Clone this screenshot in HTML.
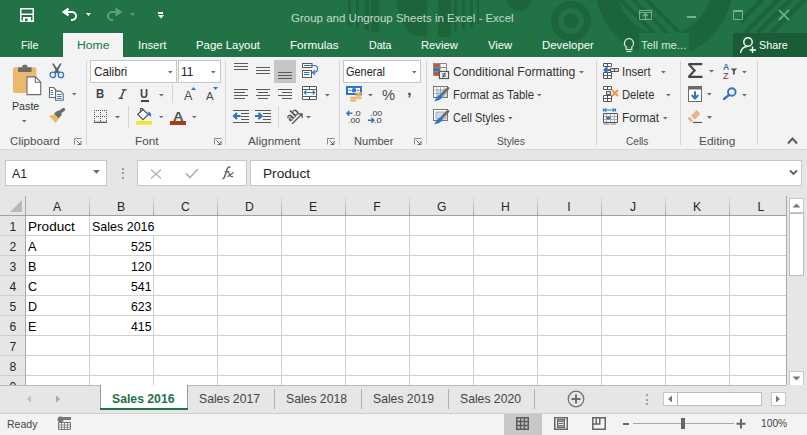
<!DOCTYPE html><html><head><meta charset="utf-8"><style>
html,body{margin:0;padding:0}
body{width:807px;height:435px;overflow:hidden;position:relative;background:#e6e6e6;font-family:"Liberation Sans",sans-serif}
.a{position:absolute}
svg.a{overflow:visible}
.t{position:absolute;white-space:nowrap;line-height:1}
</style></head><body>
<div class="a" style="left:0px;top:0px;width:807px;height:57px;background:#217346;"></div>
<svg class="a" style="left:0px;top:0px;" width="807" height="57" viewBox="0 0 807 57">
<defs><clipPath id="ci"><circle cx="664" cy="-12" r="46.5"/></clipPath></defs>
<rect x="348" y="0" width="3" height="26" fill="#1c653b"/>
<rect x="356" y="0" width="3" height="28" fill="#1c653b"/>
<rect x="365" y="0" width="4" height="30" fill="#1c653b"/>
<rect x="371" y="0" width="8" height="32" fill="#1c653b"/>
<path d="M396 0 Q401 29 415 36 H427 V0 Z" fill="#1c653b"/>
<rect x="438" y="0" width="13" height="37" fill="#1c653b"/>
<rect x="454" y="0" width="3" height="31" fill="#1c653b"/>
<rect x="462" y="0" width="3" height="30" fill="#1c653b"/>
<rect x="470" y="0" width="3" height="28" fill="#1c653b"/>
<rect x="477" y="0" width="2" height="24" fill="#1c653b"/>
<circle cx="519" cy="-2" r="13" fill="#1c653b"/>
<circle cx="571" cy="21" r="16.6" fill="none" stroke="#1c653b" stroke-width="7"/>
<circle cx="571" cy="21" r="7.5" fill="#1c653b"/>
<circle cx="664" cy="-12" r="57.25" fill="none" stroke="#1c653b" stroke-width="21.5"/>
<g clip-path="url(#ci)" stroke="#1c653b" stroke-width="4">
<path d="M604 -3 L641 34"/><path d="M618 -3 L655 34"/><path d="M631 -3 L668 34"/><path d="M644 -3 L681 34"/>
</g>
<g stroke="#1c653b" stroke-width="5">
<path d="M740 22 L764 -2"/><path d="M745 33 L781 -3"/><path d="M758 33 L794 -3"/><path d="M771 33 L807 -3"/>
</g>
</svg>
<svg class="a" style="left:20px;top:8px;" width="14" height="14" viewBox="0 0 14 14"><path d="M0.75 0.75H13.25V13.25H0.75Z M0.75 6.25H13.25" fill="none" stroke="#fff" stroke-width="1.5"/><rect x="3" y="9" width="8" height="4.2" fill="#fff"/><rect x="5" y="10.5" width="2.5" height="2.8" fill="#217346"/></svg>
<svg class="a" style="left:62px;top:7px;" width="16" height="15" viewBox="0 0 16 15"><path d="M6.6 1.8 L1.8 5 L6.6 8.2" fill="none" stroke="#fff" stroke-width="2.4" stroke-linejoin="miter"/><path d="M3 5 H10 A4 4 0 0 1 10 13 H9" fill="none" stroke="#fff" stroke-width="2"/></svg>
<svg class="a" style="left:86px;top:13px;" width="5" height="3" viewBox="0 0 5 3"><path d="M0 0H5L2.5 3Z" fill="#fff"/></svg>
<svg class="a" style="left:106px;top:7px;" width="16" height="15" viewBox="0 0 16 15"><path d="M9.4 1.8 L14.2 5 L9.4 8.2" fill="none" stroke="#5f9e79" stroke-width="2.4"/><path d="M13 5 H6 A4 4 0 0 0 6 13 H7" fill="none" stroke="#5f9e79" stroke-width="2"/></svg>
<svg class="a" style="left:130px;top:13px;" width="5" height="3" viewBox="0 0 5 3"><path d="M0 0H5L2.5 3Z" fill="#5f9e79"/></svg>
<div class="a" style="left:158px;top:12px;width:5px;height:1.5px;background:#fff;"></div>
<svg class="a" style="left:157.5px;top:14.5px;" width="6" height="3.5" viewBox="0 0 6 3.5"><path d="M0 0H6L3.0 3.5Z" fill="#fff"/></svg>
<div class="t" style="left:290.7px;top:13px;font-size:11.8px;color:#c4dacd;font-weight:400;transform:scaleX(0.9754);transform-origin:0 0;">Group and Ungroup Sheets in Excel - Excel</div>
<svg class="a" style="left:638px;top:9px;" width="15" height="12" viewBox="0 0 15 12"><path d="M1.5 1.5H13.5V10.5H1.5Z" fill="none" stroke="#7fae92" stroke-width="1"/><path d="M1.5 3.5H13.5" stroke="#7fae92"/><path d="M7.5 10V5 M5 7 L7.5 4.5 L10 7" fill="none" stroke="#7fae92" stroke-width="1.2"/></svg>
<div class="a" style="left:687px;top:16px;width:9px;height:1.5px;background:#7fae92;"></div>
<svg class="a" style="left:732px;top:9px;" width="12" height="12" viewBox="0 0 12 12"><path d="M1.5 1.5H10.5V10.5H1.5Z" fill="none" stroke="#7fae92" stroke-width="1"/><rect x="1" y="1" width="10" height="2" fill="#7fae92"/></svg>
<svg class="a" style="left:778px;top:9px;" width="12" height="12" viewBox="0 0 12 12"><path d="M1 1L11 11M11 1L1 11" stroke="#7fae92" stroke-width="1.6"/></svg>
<div class="a" style="left:639px;top:33px;width:50px;height:24px;background:#217346;"></div>
<div class="a" style="left:63px;top:33px;width:60px;height:24px;background:#f3f3f3;"></div>
<div class="a" style="left:733px;top:33px;width:74px;height:24px;background:#195c36;"></div>
<div class="t" style="left:20.5px;top:39px;font-size:11.7px;color:#fff;font-weight:400;transform:scaleX(0.9234);transform-origin:0 0;">File</div>
<div class="t" style="left:76.5px;top:39px;font-size:11.7px;color:#217346;font-weight:400;transform:scaleX(1.0453);transform-origin:0 0;">Home</div>
<div class="t" style="left:138.4px;top:39px;font-size:11.7px;color:#fff;font-weight:400;transform:scaleX(0.9680);transform-origin:0 0;">Insert</div>
<div class="t" style="left:196.4px;top:39px;font-size:11.7px;color:#fff;font-weight:400;transform:scaleX(0.9735);transform-origin:0 0;">Page Layout</div>
<div class="t" style="left:290px;top:39px;font-size:11.7px;color:#fff;font-weight:400;transform:scaleX(0.9976);transform-origin:0 0;">Formulas</div>
<div class="t" style="left:368.7px;top:39px;font-size:11.7px;color:#fff;font-weight:400;transform:scaleX(0.9068);transform-origin:0 0;">Data</div>
<div class="t" style="left:421.2px;top:39px;font-size:11.7px;color:#fff;font-weight:400;transform:scaleX(0.9601);transform-origin:0 0;">Review</div>
<div class="t" style="left:487.5px;top:39px;font-size:11.7px;color:#fff;font-weight:400;transform:scaleX(0.9592);transform-origin:0 0;">View</div>
<div class="t" style="left:541.7px;top:39px;font-size:11.7px;color:#fff;font-weight:400;transform:scaleX(0.9741);transform-origin:0 0;">Developer</div>
<svg class="a" style="left:622px;top:35.5px;" width="14" height="19" viewBox="0 0 14 19"><path d="M7 2.5 A4.8 4.8 0 0 0 4.2 11 V13.5 H9.8 V11 A4.8 4.8 0 0 0 7 2.5Z" fill="none" stroke="#d6e7dc" stroke-width="1.2"/><path d="M4.5 15.5H9.5" stroke="#d6e7dc" stroke-width="1.2"/></svg>
<div class="t" style="left:641px;top:39px;font-size:11.7px;color:#d6e7dc;font-weight:400;transform:scaleX(0.9687);transform-origin:0 0;">Tell me...</div>
<svg class="a" style="left:739px;top:36px;" width="19" height="18" viewBox="0 0 19 18"><circle cx="9" cy="6" r="4.2" fill="none" stroke="#fff" stroke-width="1.4"/><path d="M1.5 17 Q2.5 11 8 10.5" fill="none" stroke="#fff" stroke-width="1.4"/><path d="M13.5 10.5V17 M10.5 14H17" stroke="#fff" stroke-width="1.4"/></svg>
<div class="t" style="left:759.3px;top:39px;font-size:11.7px;color:#fff;font-weight:400;transform:scaleX(0.9230);transform-origin:0 0;">Share</div>
<div class="a" style="left:0px;top:57px;width:807px;height:92px;background:#f3f3f3;"></div>
<div class="a" style="left:0px;top:149px;width:807px;height:1px;background:#d8d8d8;"></div>
<div class="a" style="left:86px;top:61px;width:1px;height:84px;background:#d4d4d4;"></div>
<div class="a" style="left:225px;top:61px;width:1px;height:84px;background:#d4d4d4;"></div>
<div class="a" style="left:339px;top:61px;width:1px;height:84px;background:#d4d4d4;"></div>
<div class="a" style="left:426px;top:61px;width:1px;height:84px;background:#d4d4d4;"></div>
<div class="a" style="left:596px;top:61px;width:1px;height:84px;background:#d4d4d4;"></div>
<div class="a" style="left:680px;top:61px;width:1px;height:84px;background:#d4d4d4;"></div>
<div class="a" style="left:757px;top:61px;width:1px;height:84px;background:#d4d4d4;"></div>
<div class="a" style="left:128px;top:106px;width:1px;height:22px;background:#d4d4d4;"></div>
<div class="a" style="left:172px;top:84px;width:1px;height:19px;background:#d4d4d4;"></div>
<div class="a" style="left:278px;top:106px;width:1px;height:22px;background:#d4d4d4;"></div>
<svg class="a" style="left:12px;top:64px;" width="30" height="32" viewBox="0 0 30 32">
<rect x="1" y="3.2" width="23.4" height="25.8" rx="2" fill="#ebb96c"/>
<rect x="10.4" y="0.8" width="5" height="3" rx="1.5" fill="#6b6b6b"/>
<rect x="6" y="3.2" width="13.6" height="4.8" rx="0.8" fill="#6b6b6b"/>
<path d="M15 12.9H23.5L28.7 18.1V30.6H15Z" fill="#fff" stroke="#6b6b6b" stroke-width="1.1"/>
<path d="M23.3 12.9V18.3H28.7" fill="none" stroke="#6b6b6b" stroke-width="1.1"/>
</svg>
<div class="t" style="left:11.8px;top:100px;font-size:11.7px;color:#333;font-weight:400;transform:scaleX(0.9133);transform-origin:0 0;">Paste</div>
<svg class="a" style="left:22.4px;top:120.3px;" width="4.5" height="2.4" viewBox="0 0 4.5 2.4"><path d="M0 0H4.5L2.25 2.4Z" fill="#6b6b6b"/></svg>
<svg class="a" style="left:49px;top:63px;" width="16" height="16" viewBox="0 0 16 16">
<path d="M3 0.5 L4.7 0.4 L10.6 9.2 L8.4 10.4 Z" fill="#5f5f5f"/>
<path d="M12.7 0.5 L11 0.4 L5.1 9.2 L7.3 10.4 Z" fill="#5f5f5f"/>
<circle cx="3.8" cy="11.9" r="2.7" fill="none" stroke="#2e75c5" stroke-width="1.3"/>
<circle cx="11.9" cy="11.9" r="2.7" fill="none" stroke="#2e75c5" stroke-width="1.3"/>
</svg>
<svg class="a" style="left:48px;top:86px;" width="17" height="16" viewBox="0 0 17 16">
<path d="M1.5 1.5H5.5L7.8 3.8V11.5H1.5Z" fill="#fff" stroke="#666" stroke-width="1.1"/>
<path d="M2.6 4.5H5.2M2.6 6.5H5.2M2.6 8.5H5.2" stroke="#2e75c5" stroke-width="1"/>
<path d="M7.6 5.1H12.4L15.2 7.9V14.3H7.6Z" fill="#fff" stroke="#666" stroke-width="1.1"/>
<path d="M9.2 8.5H13.6M9.2 10.5H13.6M9.2 12.5H13.6" stroke="#2e75c5" stroke-width="1"/>
</svg>
<svg class="a" style="left:71.5px;top:93px;" width="4.5" height="2.4" viewBox="0 0 4.5 2.4"><path d="M0 0H4.5L2.25 2.4Z" fill="#6b6b6b"/></svg>
<svg class="a" style="left:48px;top:108px;" width="18" height="17" viewBox="0 0 18 17">
<path d="M1 8L6.6 6.3L10.7 11L7.6 15Z" fill="#ebb96c"/>
<path d="M6 5.5L10.2 2.3L14 6.6L10.6 10.5Z" fill="#6b6b6b"/>
<path d="M11.8 4.3L15.5 1.5" stroke="#6b6b6b" stroke-width="3.4" stroke-linecap="round"/>
</svg>
<div class="t" style="left:9.6px;top:135px;font-size:11.7px;color:#4f4f4f;font-weight:400;transform:scaleX(0.9954);transform-origin:0 0;">Clipboard</div>
<svg class="a" style="left:74px;top:138px;" width="8" height="7" viewBox="0 0 8 7"><path d="M0.5 6.5V0.5H7.5" fill="none" stroke="#8a8a8a"/><path d="M2.5 2.5L6.5 6.5M3.5 6.5H7V3" fill="none" stroke="#6a6a6a" stroke-width="1"/></svg>
<div class="a" style="left:90px;top:60px;width:87px;height:23px;background:#fff;box-sizing:border-box;border:1px solid #c6c6c6"></div>
<div class="a" style="left:178px;top:60px;width:43px;height:23px;background:#fff;box-sizing:border-box;border:1px solid #c6c6c6"></div>
<div class="t" style="left:93.6px;top:67px;font-size:11.9px;color:#262626;font-weight:400;transform:scaleX(0.9851);transform-origin:0 0;">Calibri</div>
<svg class="a" style="left:168px;top:70.8px;" width="4.6" height="2.5" viewBox="0 0 4.6 2.5"><path d="M0 0H4.6L2.3 2.5Z" fill="#6b6b6b"/></svg>
<div class="t" style="left:181px;top:67px;font-size:11.9px;color:#262626;font-weight:400;">11</div>
<svg class="a" style="left:210.8px;top:70.8px;" width="4.6" height="2.5" viewBox="0 0 4.6 2.5"><path d="M0 0H4.6L2.3 2.5Z" fill="#6b6b6b"/></svg>
<div class="t" style="left:96.2px;top:88px;font-size:12.8px;color:#444;font-weight:700;transform:scaleX(0.8865);transform-origin:0 0;">B</div>
<svg class="a" style="left:118px;top:89px;" width="9" height="10" viewBox="0 0 9 10"><path d="M4 0.8H8.5M0.5 9.2H5M6.3 0.8L2.7 9.2" stroke="#555" stroke-width="1.6" fill="none"/></svg>
<div class="t" style="left:140.4px;top:88px;font-size:12.8px;color:#444;font-weight:700;transform:scaleX(0.8649);transform-origin:0 0;">U</div>
<div class="a" style="left:140.5px;top:100.2px;width:8px;height:1.4px;background:#444;"></div>
<svg class="a" style="left:159px;top:93.8px;" width="4.8" height="2.4" viewBox="0 0 4.8 2.4"><path d="M0 0H4.8L2.4 2.4Z" fill="#6b6b6b"/></svg>
<div class="t" style="left:183.5px;top:90px;font-size:12.8px;color:#4a4a4a;font-weight:400;transform:scaleX(0.9828);transform-origin:0 0;">A</div>
<svg class="a" style="left:191px;top:86.8px;" width="5" height="3" viewBox="0 0 5 3"><path d="M0 3H5L2.5 0Z" fill="#2e75c5"/></svg>
<div class="t" style="left:205.8px;top:91px;font-size:10.9px;color:#4a4a4a;font-weight:400;transform:scaleX(1.0460);transform-origin:0 0;">A</div>
<svg class="a" style="left:213px;top:86.8px;" width="5" height="3" viewBox="0 0 5 3"><path d="M0 0H5L2.5 3Z" fill="#2e75c5"/></svg>
<svg class="a" style="left:93px;top:109px;" width="15" height="14" viewBox="0 0 15 14"><path d="M1.5 1V12M7.5 1V12M13.5 1V12M1 1.5H14M1 7.5H14" stroke="#555" stroke-width="1" stroke-dasharray="1 1" fill="none"/><path d="M0.8 13.3H14.2" stroke="#555" stroke-width="1.3"/></svg>
<svg class="a" style="left:115px;top:115.8px;" width="5" height="2.5" viewBox="0 0 5 2.5"><path d="M0 0H5L2.5 2.5Z" fill="#6b6b6b"/></svg>
<svg class="a" style="left:135px;top:107px;" width="18" height="19" viewBox="0 0 18 19">
<path d="M2.8 7.5 L8 2.3 L13.2 7.5 L8 12.7 Z" fill="#fff" stroke="#555" stroke-width="1.2"/>
<path d="M5.5 5.5 V1.5 H7.5 V4" fill="none" stroke="#555" stroke-width="1.1"/>
<path d="M13.2 4.5 Q16.8 5.5 16 9.5 Q13.2 9 13.2 6.8 Z" fill="#2e75c5"/>
<rect x="1" y="14" width="16" height="3.7" fill="#f2e52a"/>
</svg>
<svg class="a" style="left:158.5px;top:116.3px;" width="4.5" height="2.3" viewBox="0 0 4.5 2.3"><path d="M0 0H4.5L2.25 2.3Z" fill="#6b6b6b"/></svg>
<div class="t" style="left:172.6px;top:110px;font-size:13.2px;color:#555;font-weight:700;transform:scaleX(1.1121);transform-origin:0 0;">A</div>
<div class="a" style="left:170px;top:121px;width:16px;height:3.7px;background:#a33f14;"></div>
<svg class="a" style="left:192px;top:116.3px;" width="4.6" height="2.3" viewBox="0 0 4.6 2.3"><path d="M0 0H4.6L2.3 2.3Z" fill="#6b6b6b"/></svg>
<div class="t" style="left:135.3px;top:135px;font-size:11.7px;color:#4f4f4f;font-weight:400;transform:scaleX(1.0090);transform-origin:0 0;">Font</div>
<svg class="a" style="left:214px;top:138px;" width="8" height="7" viewBox="0 0 8 7"><path d="M0.5 6.5V0.5H7.5" fill="none" stroke="#8a8a8a"/><path d="M2.5 2.5L6.5 6.5M3.5 6.5H7V3" fill="none" stroke="#6a6a6a" stroke-width="1"/></svg>
<div class="a" style="left:234px;top:63px;width:14px;height:1px;background:#5a5a5a;"></div>
<div class="a" style="left:234px;top:66px;width:14px;height:1px;background:#5a5a5a;"></div>
<div class="a" style="left:234px;top:69px;width:14px;height:1px;background:#5a5a5a;"></div>
<div class="a" style="left:256px;top:67px;width:14px;height:1px;background:#5a5a5a;"></div>
<div class="a" style="left:256px;top:70px;width:14px;height:1px;background:#5a5a5a;"></div>
<div class="a" style="left:256px;top:73px;width:14px;height:1px;background:#5a5a5a;"></div>
<div class="a" style="left:274px;top:60px;width:22px;height:23px;background:#c6c6c6;"></div>
<div class="a" style="left:278px;top:72px;width:14px;height:1px;background:#5a5a5a;"></div>
<div class="a" style="left:278px;top:75px;width:14px;height:1px;background:#5a5a5a;"></div>
<div class="a" style="left:278px;top:78px;width:14px;height:1px;background:#5a5a5a;"></div>
<div class="a" style="left:234px;top:89px;width:14px;height:1px;background:#5a5a5a;"></div>
<div class="a" style="left:256px;top:89px;width:14px;height:1px;background:#5a5a5a;"></div>
<div class="a" style="left:278px;top:89px;width:14px;height:1px;background:#5a5a5a;"></div>
<div class="a" style="left:234px;top:92px;width:11px;height:1px;background:#5a5a5a;"></div>
<div class="a" style="left:258px;top:92px;width:10px;height:1px;background:#5a5a5a;"></div>
<div class="a" style="left:282px;top:92px;width:10px;height:1px;background:#5a5a5a;"></div>
<div class="a" style="left:234px;top:95px;width:14px;height:1px;background:#5a5a5a;"></div>
<div class="a" style="left:256px;top:95px;width:14px;height:1px;background:#5a5a5a;"></div>
<div class="a" style="left:278px;top:95px;width:14px;height:1px;background:#5a5a5a;"></div>
<div class="a" style="left:234px;top:98px;width:11px;height:1px;background:#5a5a5a;"></div>
<div class="a" style="left:258px;top:98px;width:10px;height:1px;background:#5a5a5a;"></div>
<div class="a" style="left:282px;top:98px;width:10px;height:1px;background:#5a5a5a;"></div>
<div class="a" style="left:233px;top:110px;width:16px;height:1px;background:#5a5a5a;"></div>
<div class="a" style="left:255px;top:110px;width:16px;height:1px;background:#5a5a5a;"></div>
<div class="a" style="left:233px;top:122px;width:16px;height:1px;background:#5a5a5a;"></div>
<div class="a" style="left:255px;top:122px;width:16px;height:1px;background:#5a5a5a;"></div>
<div class="a" style="left:241px;top:113px;width:8px;height:1px;background:#5a5a5a;"></div>
<div class="a" style="left:263px;top:113px;width:8px;height:1px;background:#5a5a5a;"></div>
<div class="a" style="left:241px;top:116px;width:8px;height:1px;background:#5a5a5a;"></div>
<div class="a" style="left:263px;top:116px;width:8px;height:1px;background:#5a5a5a;"></div>
<div class="a" style="left:241px;top:119px;width:8px;height:1px;background:#5a5a5a;"></div>
<div class="a" style="left:263px;top:119px;width:8px;height:1px;background:#5a5a5a;"></div>
<svg class="a" style="left:232px;top:111px;" width="10" height="10" viewBox="0 0 10 10"><path d="M8.5 5H2.5M5 2L2 5L5 8" stroke="#2e75c5" stroke-width="2.2" fill="none"/></svg>
<svg class="a" style="left:254px;top:111px;" width="10" height="10" viewBox="0 0 10 10"><path d="M1 5H7M4.5 2L7.5 5L4.5 8" stroke="#2e75c5" stroke-width="2.2" fill="none"/></svg>
<svg class="a" style="left:284px;top:107px;" width="20" height="19" viewBox="0 0 20 19">
<text x="0" y="0" transform="translate(6.3 15) rotate(-45)" font-family="Liberation Sans" font-size="11.5" font-weight="700" fill="#505050">ab</text>
<path d="M8.2 16.8 L17.6 7.4 M14.3 6.9 H18.1 V10.7" stroke="#505050" stroke-width="1.3" fill="none"/>
</svg>
<svg class="a" style="left:306px;top:116.4px;" width="5" height="2.4" viewBox="0 0 5 2.4"><path d="M0 0H5L2.5 2.4Z" fill="#6b6b6b"/></svg>
<svg class="a" style="left:301px;top:62px;" width="18" height="17" viewBox="0 0 18 17">
<rect x="1.5" y="1.5" width="9.5" height="4" fill="#fff" stroke="#5a5a5a" stroke-width="1"/>
<rect x="1.5" y="8.5" width="9" height="7" fill="#fff" stroke="#5a5a5a" stroke-width="1"/>
<path d="M3 3.5H13.5 Q16.5 3.5 16.5 6.8 Q16.5 10.5 12.5 10.5" fill="none" stroke="#2e75c5" stroke-width="1.2"/>
<path d="M14 8.3L11.5 10.5L14 12.7" fill="none" stroke="#2e75c5" stroke-width="1.3"/>
<path d="M3 10.5H8.5M3 12.5H8.5" stroke="#2e75c5" stroke-width="1"/>
</svg>
<svg class="a" style="left:301px;top:85px;" width="17" height="16" viewBox="0 0 17 16">
<path d="M1.5 1.5H15.5V14.5H1.5Z M1.5 4.5H15.5 M1.5 11.5H15.5 M8.5 1.5V4.5 M8.5 11.5V14.5" fill="#fff" stroke="#5a5a5a" stroke-width="1"/>
<path d="M3.3 7.5H13.7 M5.3 5.5L3.3 7.5L5.3 9.5 M11.7 5.5L13.7 7.5L11.7 9.5" stroke="#2e75c5" stroke-width="1.2" fill="none"/>
</svg>
<svg class="a" style="left:324.5px;top:93.8px;" width="4.7" height="2.4" viewBox="0 0 4.7 2.4"><path d="M0 0H4.7L2.35 2.4Z" fill="#6b6b6b"/></svg>
<div class="t" style="left:247.5px;top:135px;font-size:11.7px;color:#4f4f4f;font-weight:400;transform:scaleX(1.0080);transform-origin:0 0;">Alignment</div>
<svg class="a" style="left:327px;top:138px;" width="8" height="7" viewBox="0 0 8 7"><path d="M0.5 6.5V0.5H7.5" fill="none" stroke="#8a8a8a"/><path d="M2.5 2.5L6.5 6.5M3.5 6.5H7V3" fill="none" stroke="#6a6a6a" stroke-width="1"/></svg>
<div class="a" style="left:343px;top:60px;width:78px;height:23px;background:#fff;box-sizing:border-box;border:1px solid #c6c6c6"></div>
<div class="t" style="left:346.4px;top:67px;font-size:11.9px;color:#262626;font-weight:400;transform:scaleX(0.9194);transform-origin:0 0;">General</div>
<svg class="a" style="left:411.6px;top:70.8px;" width="4.6" height="2.4" viewBox="0 0 4.6 2.4"><path d="M0 0H4.6L2.3 2.4Z" fill="#6b6b6b"/></svg>
<svg class="a" style="left:345px;top:85px;" width="18" height="18" viewBox="0 0 18 18">
<rect x="2" y="2" width="14" height="7" fill="#fff" stroke="#2e75c5" stroke-width="2"/>
<circle cx="9" cy="5.3" r="2.3" fill="#2e75c5"/>
<path d="M6 5.3H3.5M12 5.3H14.5" stroke="#2e75c5" stroke-width="1"/>
<ellipse cx="13.5" cy="8.2" rx="3.3" ry="1.2" fill="#ebb96c"/>
<ellipse cx="13.5" cy="10.6" rx="3.3" ry="1.2" fill="#ebb96c"/>
<ellipse cx="13.5" cy="13" rx="3.3" ry="1.2" fill="#ebb96c"/>
<ellipse cx="8.3" cy="12.8" rx="3.4" ry="1.3" fill="#ebb96c"/>
<ellipse cx="8.3" cy="15.5" rx="3.4" ry="1.3" fill="#ebb96c"/>
</svg>
<svg class="a" style="left:367.7px;top:93.8px;" width="4.8" height="2.6" viewBox="0 0 4.8 2.6"><path d="M0 0H4.8L2.4 2.6Z" fill="#6b6b6b"/></svg>
<div class="t" style="left:382px;top:88px;font-size:14.6px;color:#4a4a4a;font-weight:400;transform:scaleX(1.0012);transform-origin:0 0;">%</div>
<div class="t" style="left:406.6px;top:83px;font-size:14px;color:#4a4a4a;font-weight:700;transform:scaleX(1.1823);transform-origin:0 0;">,</div>
<svg class="a" style="left:345px;top:110px;" width="8" height="7" viewBox="0 0 8 7"><path d="M7.5 3.3H2M4.3 1L2 3.3L4.3 5.6" stroke="#2e75c5" stroke-width="1.5" fill="none"/></svg>
<div class="t" style="left:352.6px;top:110px;font-size:7.6px;color:#333;font-weight:400;transform:scaleX(1.2296);transform-origin:0 0;">.0</div>
<div class="t" style="left:347.8px;top:117px;font-size:7.6px;color:#333;font-weight:400;transform:scaleX(1.1550);transform-origin:0 0;">.00</div>
<div class="t" style="left:370px;top:110px;font-size:7.6px;color:#333;font-weight:400;transform:scaleX(1.1550);transform-origin:0 0;">.00</div>
<svg class="a" style="left:367px;top:117px;" width="9" height="7" viewBox="0 0 9 7"><path d="M1 3.3H6.8M4.5 1L6.8 3.3L4.5 5.6" stroke="#2e75c5" stroke-width="1.5" fill="none"/></svg>
<div class="t" style="left:374.4px;top:117px;font-size:7.6px;color:#333;font-weight:400;transform:scaleX(1.2296);transform-origin:0 0;">.0</div>
<div class="t" style="left:353.9px;top:135px;font-size:11.7px;color:#4f4f4f;font-weight:400;transform:scaleX(0.9500);transform-origin:0 0;">Number</div>
<svg class="a" style="left:414px;top:138px;" width="8" height="7" viewBox="0 0 8 7"><path d="M0.5 6.5V0.5H7.5" fill="none" stroke="#8a8a8a"/><path d="M2.5 2.5L6.5 6.5M3.5 6.5H7V3" fill="none" stroke="#6a6a6a" stroke-width="1"/></svg>
<svg class="a" style="left:432px;top:62px;" width="18" height="18" viewBox="0 0 18 18">
<rect x="1" y="1" width="7" height="4" fill="#c55a2a"/>
<rect x="1" y="5" width="7" height="4" fill="#2e75c5"/>
<rect x="1" y="9" width="7" height="4" fill="#c55a2a"/>
<path d="M1.5 1.5H14.5V13.5H1.5ZM8 1.5V13.5M1.5 5.5H14.5M1.5 9.5H14.5" fill="none" stroke="#8a8a8a" stroke-width="1"/>
<rect x="7.5" y="9.5" width="9" height="7" fill="#fff" stroke="#555" stroke-width="1.2"/>
<path d="M9.8 12H14.2M9.8 14.2H14.2M13 10.8L11 15.4" stroke="#333" stroke-width="0.9"/>
</svg>
<div class="t" style="left:452.8px;top:67px;font-size:11.9px;color:#333;font-weight:400;transform:scaleX(1.0231);transform-origin:0 0;">Conditional Formatting</div>
<svg class="a" style="left:578.8px;top:70.8px;" width="4.9" height="2.6" viewBox="0 0 4.9 2.6"><path d="M0 0H4.9L2.45 2.6Z" fill="#6b6b6b"/></svg>
<svg class="a" style="left:432px;top:85px;" width="18" height="18" viewBox="0 0 18 18">
<rect x="1.5" y="1.5" width="14" height="11" fill="#fff" stroke="#777" stroke-width="1"/>
<rect x="5" y="5" width="10" height="7" fill="#c9ddef"/>
<path d="M5 1.5V12.5M8.5 1.5V12.5M12 1.5V12.5M1.5 5H15.5M1.5 8.5H15.5" stroke="#9a9a9a" stroke-width="0.8"/>
</svg>
<svg class="a" style="left:432px;top:85px;" width="18" height="18" viewBox="0 0 18 18">
<path d="M16 3.2 L10 9.2" stroke="#6b6b6b" stroke-width="2.8" stroke-linecap="round"/>
<path d="M9.8 9 Q11.6 10.8 9.6 13.2 Q7.2 15.8 2.2 16.4 Q3.8 13.8 5 12 Q7 9 9.8 9Z" fill="#2e75c5"/>
</svg>
<div class="t" style="left:452.8px;top:90px;font-size:11.9px;color:#333;font-weight:400;transform:scaleX(0.9536);transform-origin:0 0;">Format as Table</div>
<svg class="a" style="left:537.2px;top:93.8px;" width="4.6" height="2.4" viewBox="0 0 4.6 2.4"><path d="M0 0H4.6L2.3 2.4Z" fill="#6b6b6b"/></svg>
<svg class="a" style="left:432px;top:108px;" width="18" height="18" viewBox="0 0 18 18">
<rect x="1.5" y="1.5" width="14" height="11" fill="#fff" stroke="#777" stroke-width="1"/>
<rect x="4" y="4" width="10" height="7" fill="#c9ddef" stroke="#9a9a9a" stroke-width="0.8"/>
</svg>
<svg class="a" style="left:432px;top:108px;" width="18" height="18" viewBox="0 0 18 18">
<path d="M16 3.2 L10 9.2" stroke="#6b6b6b" stroke-width="2.8" stroke-linecap="round"/>
<path d="M9.8 9 Q11.6 10.8 9.6 13.2 Q7.2 15.8 2.2 16.4 Q3.8 13.8 5 12 Q7 9 9.8 9Z" fill="#2e75c5"/>
</svg>
<div class="t" style="left:452.8px;top:113px;font-size:11.9px;color:#333;font-weight:400;transform:scaleX(0.9204);transform-origin:0 0;">Cell Styles</div>
<svg class="a" style="left:508.2px;top:117.2px;" width="4.6" height="2.4" viewBox="0 0 4.6 2.4"><path d="M0 0H4.6L2.3 2.4Z" fill="#6b6b6b"/></svg>
<div class="t" style="left:496.6px;top:135px;font-size:11.7px;color:#4f4f4f;font-weight:400;transform:scaleX(0.8766);transform-origin:0 0;">Styles</div>
<svg class="a" style="left:602px;top:62px;" width="18" height="18" viewBox="0 0 18 18">
<path d="M1.5 1.5H9.5V4.5H1.5ZM5.5 1.5V4.5" fill="#fff" stroke="#555" stroke-width="1"/>
<path d="M1.5 10.5H9.5V16.5H1.5ZM5.5 10.5V16.5M1.5 13.5H9.5" fill="#fff" stroke="#555" stroke-width="1"/>
<path d="M8.5 6.5H16.5V9.5H8.5ZM12.5 6.5V9.5" fill="#c6e0f5" stroke="#555" stroke-width="1"/>
<path d="M8 8H3M5.3 5.2L2.5 8L5.3 10.8" stroke="#2e75c5" stroke-width="2" fill="none"/>
</svg>
<div class="t" style="left:622.4px;top:67px;font-size:11.9px;color:#333;font-weight:400;transform:scaleX(0.9613);transform-origin:0 0;">Insert</div>
<svg class="a" style="left:661.2px;top:70.8px;" width="4.8" height="2.6" viewBox="0 0 4.8 2.6"><path d="M0 0H4.8L2.4 2.6Z" fill="#6b6b6b"/></svg>
<svg class="a" style="left:602px;top:85px;" width="18" height="18" viewBox="0 0 18 18">
<path d="M1.5 1.5H9.5V4.5H1.5ZM5.5 1.5V4.5" fill="#fff" stroke="#555" stroke-width="1"/>
<path d="M1.5 10.5H9.5V16.5H1.5ZM5.5 10.5V16.5M1.5 13.5H9.5" fill="#fff" stroke="#555" stroke-width="1"/>
<path d="M4.5 6.5H8.5V9.5H4.5Z" fill="#c6e0f5" stroke="#555" stroke-width="1"/>
<path d="M10 5L16 11M16 5L10 11" stroke="#eb9a3a" stroke-width="1.9"/>
</svg>
<div class="t" style="left:622.4px;top:90px;font-size:11.9px;color:#333;font-weight:400;transform:scaleX(0.9425);transform-origin:0 0;">Delete</div>
<svg class="a" style="left:665.5px;top:93.8px;" width="4.7" height="2.4" viewBox="0 0 4.7 2.4"><path d="M0 0H4.7L2.35 2.4Z" fill="#6b6b6b"/></svg>
<svg class="a" style="left:602px;top:108px;" width="18" height="18" viewBox="0 0 18 18">
<path d="M1.5 0.5V3.5M13.5 0.5V3.5" stroke="#2e75c5" stroke-width="1.2"/>
<path d="M2.5 2H12.5M4.3 0.4L2.5 2L4.3 3.6M10.7 0.4L12.5 2L10.7 3.6" stroke="#2e75c5" stroke-width="1.1" fill="none"/>
<path d="M4.5 5.5V14.5M8.5 5.5V14.5M12.5 5.5V14.5M1.5 8.5H15.5M1.5 11.5H15.5" stroke="#b0b0b0" stroke-width="1"/>
<rect x="4.5" y="8.5" width="4" height="3" fill="#2e75c5"/>
<path d="M1.5 5.5H15.5V14.5H1.5Z" fill="none" stroke="#555" stroke-width="1"/>
<path d="M1.5 16H7.5M8.5 16H14" stroke="#888" stroke-width="1.2"/>
</svg>
<div class="t" style="left:622.4px;top:113px;font-size:11.9px;color:#333;font-weight:400;transform:scaleX(0.9848);transform-origin:0 0;">Format</div>
<svg class="a" style="left:663px;top:117.2px;" width="4.6" height="2.4" viewBox="0 0 4.6 2.4"><path d="M0 0H4.6L2.3 2.4Z" fill="#6b6b6b"/></svg>
<div class="t" style="left:626px;top:135px;font-size:11.7px;color:#4f4f4f;font-weight:400;transform:scaleX(0.8621);transform-origin:0 0;">Cells</div>
<svg class="a" style="left:686px;top:62px;" width="17" height="17" viewBox="0 0 17 17"><path d="M15.2 3.2V2.1H2.6L8.6 8.5L2.6 14.9H15.4V13.8" fill="none" stroke="#444" stroke-width="2.1" stroke-miterlimit="2"/></svg>
<svg class="a" style="left:709px;top:70.1px;" width="5" height="2.6" viewBox="0 0 5 2.6"><path d="M0 0H5L2.5 2.6Z" fill="#6b6b6b"/></svg>
<div class="t" style="left:722.6px;top:63px;font-size:8.8px;color:#2e75c5;font-weight:700;transform:scaleX(0.9749);transform-origin:0 0;">A</div>
<div class="t" style="left:723.2px;top:72px;font-size:8.8px;color:#8a2b4e;font-weight:400;transform:scaleX(1.0419);transform-origin:0 0;">Z</div>
<svg class="a" style="left:730px;top:68px;" width="8" height="7" viewBox="0 0 8 7"><path d="M0.6 0.4H7.2L4.8 3V6.5H3V3Z" fill="#555"/></svg>
<svg class="a" style="left:742px;top:70.8px;" width="4.8" height="2.4" viewBox="0 0 4.8 2.4"><path d="M0 0H4.8L2.4 2.4Z" fill="#6b6b6b"/></svg>
<svg class="a" style="left:687px;top:85px;" width="16" height="18" viewBox="0 0 16 18">
<rect x="1.5" y="1.5" width="13" height="15" fill="#fff" stroke="#6b6b6b" stroke-width="1"/>
<rect x="1" y="1" width="14" height="3.5" fill="#6b6b6b"/>
<path d="M8 6.3V13.3M4.6 10L8 13.5L11.4 10" stroke="#2e75c5" stroke-width="2" fill="none"/>
</svg>
<svg class="a" style="left:707.4px;top:92.9px;" width="4.6" height="2.5" viewBox="0 0 4.6 2.5"><path d="M0 0H4.6L2.3 2.5Z" fill="#6b6b6b"/></svg>
<svg class="a" style="left:722px;top:87px;" width="16" height="14" viewBox="0 0 16 14"><circle cx="9.8" cy="5" r="3.8" fill="none" stroke="#2e75c5" stroke-width="1.9"/><path d="M7 7.9L2 12" stroke="#2e75c5" stroke-width="2.3" stroke-linecap="round"/></svg>
<svg class="a" style="left:742px;top:93.8px;" width="4.8" height="2.4" viewBox="0 0 4.8 2.4"><path d="M0 0H4.8L2.4 2.4Z" fill="#6b6b6b"/></svg>
<svg class="a" style="left:687px;top:108px;" width="16" height="16" viewBox="0 0 16 16">
<rect x="-2.75" y="-4.1" width="5.5" height="8.2" rx="1" fill="#eab28d" transform="translate(8.75 6.85) rotate(45)"/>
<rect x="-2.75" y="-1.3" width="5.5" height="2.6" rx="0.8" fill="#eab28d" transform="translate(3.4 11.6) rotate(45)"/>
<path d="M6 14.5H15" stroke="#555" stroke-width="1.2"/>
</svg>
<svg class="a" style="left:706.9px;top:115.9px;" width="5" height="3" viewBox="0 0 5 3"><path d="M0 0H5L2.5 3Z" fill="#6b6b6b"/></svg>
<div class="t" style="left:699.4px;top:135px;font-size:11.7px;color:#4f4f4f;font-weight:400;transform:scaleX(1.0154);transform-origin:0 0;">Editing</div>
<svg class="a" style="left:787px;top:137px;" width="11" height="8" viewBox="0 0 11 8"><path d="M1 6.5L5.5 1.5L10 6.5" fill="none" stroke="#5e5e5e" stroke-width="2"/></svg>
<div class="a" style="left:0px;top:150px;width:807px;height:46px;background:#e5e6e5;"></div>
<div class="a" style="left:5px;top:160px;width:102px;height:26px;background:#fff;box-sizing:border-box;border:1px solid #c6c6c6"></div>
<div class="t" style="left:12px;top:168px;font-size:12.3px;color:#262626;font-weight:400;transform:scaleX(0.9969);transform-origin:0 0;">A1</div>
<svg class="a" style="left:92.9px;top:170.3px;" width="6.9" height="3.7" viewBox="0 0 6.9 3.7"><path d="M0 0H6.9L3.45 3.7Z" fill="#6b6b6b"/></svg>
<div class="a" style="left:121.5px;top:167.5px;width:2px;height:2px;background:#9a9a9a;"></div>
<div class="a" style="left:121.5px;top:172px;width:2px;height:2px;background:#9a9a9a;"></div>
<div class="a" style="left:121.5px;top:176.5px;width:2px;height:2px;background:#9a9a9a;"></div>
<div class="a" style="left:137px;top:160px;width:110px;height:26px;background:#fff;box-sizing:border-box;border:1px solid #c6c6c6"></div>
<svg class="a" style="left:150px;top:169px;" width="12" height="10" viewBox="0 0 12 10"><path d="M1 0.5L11 9.5M11 0.5L1 9.5" stroke="#b4b4b4" stroke-width="1.4"/></svg>
<svg class="a" style="left:185px;top:168px;" width="14" height="11" viewBox="0 0 14 11"><path d="M1 5.5L5 9.5L13 1" fill="none" stroke="#b4b4b4" stroke-width="1.8"/></svg>
<svg class="a" style="left:221px;top:166px;" width="14" height="14" viewBox="0 0 14 14"><path d="M1.3 12.3 Q2.8 13.2 3.8 10.2 L6.3 2.6 Q7.1 0.6 9.6 1.1" stroke="#666" stroke-width="1.5" fill="none"/><path d="M3.6 5.6H8.3" stroke="#666" stroke-width="1.2"/><path d="M6.3 6.3 Q7.5 6 8.2 7.5 L9.6 10.2 Q10.3 11.2 12 10.3 M12.6 6.4 L6.5 10.8" stroke="#666" stroke-width="1.2" fill="none"/></svg>
<div class="a" style="left:250px;top:160px;width:552px;height:26px;background:#fff;box-sizing:border-box;border:1px solid #c6c6c6"></div>
<div class="t" style="left:262.9px;top:168px;font-size:12.6px;color:#262626;font-weight:400;transform:scaleX(1.0828);transform-origin:0 0;">Product</div>
<svg class="a" style="left:789px;top:169px;" width="9" height="7" viewBox="0 0 9 7"><path d="M1 1.5L4.5 5L8 1.5" fill="none" stroke="#606060" stroke-width="1.8"/></svg>
<div class="a" style="left:25px;top:215px;width:761px;height:170px;background:#fff;"></div>
<div class="a" style="left:0px;top:196px;width:786px;height:19px;background:#e5e6e5;"></div>
<div class="a" style="left:0px;top:215px;width:25px;height:170px;background:#e5e6e5;"></div>
<svg class="a" style="left:9px;top:199px;" width="14" height="14" viewBox="0 0 14 14"><path d="M13 1V13H1Z" fill="#b8b8b8"/></svg>
<div class="a" style="left:0px;top:215px;width:786px;height:1px;background:#a0a0a0;"></div>
<div class="a" style="left:25px;top:196px;width:1px;height:189px;background:#a8a8a8;"></div>
<div class="a" style="left:89px;top:196px;width:1px;height:19px;background:linear-gradient(#dcdcdc,#a8a8a8);"></div>
<div class="a" style="left:89px;top:216px;width:1px;height:169px;background:#d0d0d0;"></div>
<div class="t" style="left:53px;top:201px;font-size:12.2px;color:#262626;font-weight:400;width:8px;text-align:center;">A</div>
<div class="a" style="left:153px;top:196px;width:1px;height:19px;background:linear-gradient(#dcdcdc,#a8a8a8);"></div>
<div class="a" style="left:153px;top:216px;width:1px;height:169px;background:#d0d0d0;"></div>
<div class="t" style="left:117px;top:201px;font-size:12.2px;color:#262626;font-weight:400;width:8px;text-align:center;">B</div>
<div class="a" style="left:217px;top:196px;width:1px;height:19px;background:linear-gradient(#dcdcdc,#a8a8a8);"></div>
<div class="a" style="left:217px;top:216px;width:1px;height:169px;background:#d0d0d0;"></div>
<div class="t" style="left:181px;top:201px;font-size:12.2px;color:#262626;font-weight:400;width:8px;text-align:center;">C</div>
<div class="a" style="left:281px;top:196px;width:1px;height:19px;background:linear-gradient(#dcdcdc,#a8a8a8);"></div>
<div class="a" style="left:281px;top:216px;width:1px;height:169px;background:#d0d0d0;"></div>
<div class="t" style="left:245px;top:201px;font-size:12.2px;color:#262626;font-weight:400;width:8px;text-align:center;">D</div>
<div class="a" style="left:345px;top:196px;width:1px;height:19px;background:linear-gradient(#dcdcdc,#a8a8a8);"></div>
<div class="a" style="left:345px;top:216px;width:1px;height:169px;background:#d0d0d0;"></div>
<div class="t" style="left:309px;top:201px;font-size:12.2px;color:#262626;font-weight:400;width:8px;text-align:center;">E</div>
<div class="a" style="left:409px;top:196px;width:1px;height:19px;background:linear-gradient(#dcdcdc,#a8a8a8);"></div>
<div class="a" style="left:409px;top:216px;width:1px;height:169px;background:#d0d0d0;"></div>
<div class="t" style="left:373px;top:201px;font-size:12.2px;color:#262626;font-weight:400;width:8px;text-align:center;">F</div>
<div class="a" style="left:473px;top:196px;width:1px;height:19px;background:linear-gradient(#dcdcdc,#a8a8a8);"></div>
<div class="a" style="left:473px;top:216px;width:1px;height:169px;background:#d0d0d0;"></div>
<div class="t" style="left:437px;top:201px;font-size:12.2px;color:#262626;font-weight:400;width:8px;text-align:center;">G</div>
<div class="a" style="left:537px;top:196px;width:1px;height:19px;background:linear-gradient(#dcdcdc,#a8a8a8);"></div>
<div class="a" style="left:537px;top:216px;width:1px;height:169px;background:#d0d0d0;"></div>
<div class="t" style="left:501px;top:201px;font-size:12.2px;color:#262626;font-weight:400;width:8px;text-align:center;">H</div>
<div class="a" style="left:601px;top:196px;width:1px;height:19px;background:linear-gradient(#dcdcdc,#a8a8a8);"></div>
<div class="a" style="left:601px;top:216px;width:1px;height:169px;background:#d0d0d0;"></div>
<div class="t" style="left:565px;top:201px;font-size:12.2px;color:#262626;font-weight:400;width:8px;text-align:center;">I</div>
<div class="a" style="left:665px;top:196px;width:1px;height:19px;background:linear-gradient(#dcdcdc,#a8a8a8);"></div>
<div class="a" style="left:665px;top:216px;width:1px;height:169px;background:#d0d0d0;"></div>
<div class="t" style="left:629px;top:201px;font-size:12.2px;color:#262626;font-weight:400;width:8px;text-align:center;">J</div>
<div class="a" style="left:729px;top:196px;width:1px;height:19px;background:linear-gradient(#dcdcdc,#a8a8a8);"></div>
<div class="a" style="left:729px;top:216px;width:1px;height:169px;background:#d0d0d0;"></div>
<div class="t" style="left:693px;top:201px;font-size:12.2px;color:#262626;font-weight:400;width:8px;text-align:center;">K</div>
<div class="t" style="left:757px;top:201px;font-size:12.2px;color:#262626;font-weight:400;width:8px;text-align:center;">L</div>
<div class="a" style="left:0px;top:235px;width:25px;height:1px;background:#cfcfcf;"></div>
<div class="a" style="left:26px;top:235px;width:760px;height:1px;background:#d0d0d0;"></div>
<div class="t" style="left:5px;top:221px;font-size:12.2px;color:#262626;font-weight:400;width:16px;text-align:center;">1</div>
<div class="a" style="left:0px;top:255px;width:25px;height:1px;background:#cfcfcf;"></div>
<div class="a" style="left:26px;top:255px;width:760px;height:1px;background:#d0d0d0;"></div>
<div class="t" style="left:5px;top:241px;font-size:12.2px;color:#262626;font-weight:400;width:16px;text-align:center;">2</div>
<div class="a" style="left:0px;top:275px;width:25px;height:1px;background:#cfcfcf;"></div>
<div class="a" style="left:26px;top:275px;width:760px;height:1px;background:#d0d0d0;"></div>
<div class="t" style="left:5px;top:261px;font-size:12.2px;color:#262626;font-weight:400;width:16px;text-align:center;">3</div>
<div class="a" style="left:0px;top:295px;width:25px;height:1px;background:#cfcfcf;"></div>
<div class="a" style="left:26px;top:295px;width:760px;height:1px;background:#d0d0d0;"></div>
<div class="t" style="left:5px;top:281px;font-size:12.2px;color:#262626;font-weight:400;width:16px;text-align:center;">4</div>
<div class="a" style="left:0px;top:315px;width:25px;height:1px;background:#cfcfcf;"></div>
<div class="a" style="left:26px;top:315px;width:760px;height:1px;background:#d0d0d0;"></div>
<div class="t" style="left:5px;top:301px;font-size:12.2px;color:#262626;font-weight:400;width:16px;text-align:center;">5</div>
<div class="a" style="left:0px;top:335px;width:25px;height:1px;background:#cfcfcf;"></div>
<div class="a" style="left:26px;top:335px;width:760px;height:1px;background:#d0d0d0;"></div>
<div class="t" style="left:5px;top:321px;font-size:12.2px;color:#262626;font-weight:400;width:16px;text-align:center;">6</div>
<div class="a" style="left:0px;top:355px;width:25px;height:1px;background:#cfcfcf;"></div>
<div class="a" style="left:26px;top:355px;width:760px;height:1px;background:#d0d0d0;"></div>
<div class="t" style="left:5px;top:341px;font-size:12.2px;color:#262626;font-weight:400;width:16px;text-align:center;">7</div>
<div class="a" style="left:0px;top:375px;width:25px;height:1px;background:#cfcfcf;"></div>
<div class="a" style="left:26px;top:375px;width:760px;height:1px;background:#d0d0d0;"></div>
<div class="t" style="left:5px;top:361px;font-size:12.2px;color:#262626;font-weight:400;width:16px;text-align:center;">8</div>
<div class="t" style="left:5px;top:381px;font-size:12.2px;color:#262626;font-weight:400;width:16px;text-align:center;">9</div>
<div class="a" style="left:786px;top:196px;width:1px;height:190px;background:#a8a8a8;"></div>
<div class="a" style="left:787px;top:196px;width:20px;height:189px;background:#e5e6e5;"></div>
<div class="t" style="left:28px;top:221px;font-size:12.6px;color:#000;font-weight:400;transform:scaleX(1.0782);transform-origin:0 0;">Product</div>
<div class="a" style="left:153px;top:216px;width:1px;height:19px;background:#fff;"></div>
<div class="t" style="left:92px;top:221px;font-size:12.6px;color:#000;font-weight:400;transform:scaleX(0.9916);transform-origin:0 0;">Sales 2016</div>
<div class="t" style="left:28px;top:241px;font-size:12.6px;color:#000;font-weight:400;">A</div>
<div class="t" style="left:130.5px;top:241px;font-size:12.6px;color:#000;font-weight:400;transform:scaleX(0.9755);transform-origin:0 0;">525</div>
<div class="t" style="left:28px;top:261px;font-size:12.6px;color:#000;font-weight:400;">B</div>
<div class="t" style="left:130.5px;top:261px;font-size:12.6px;color:#000;font-weight:400;transform:scaleX(0.9755);transform-origin:0 0;">120</div>
<div class="t" style="left:28px;top:281px;font-size:12.6px;color:#000;font-weight:400;">C</div>
<div class="t" style="left:130.5px;top:281px;font-size:12.6px;color:#000;font-weight:400;transform:scaleX(0.9755);transform-origin:0 0;">541</div>
<div class="t" style="left:28px;top:301px;font-size:12.6px;color:#000;font-weight:400;">D</div>
<div class="t" style="left:130.5px;top:301px;font-size:12.6px;color:#000;font-weight:400;transform:scaleX(0.9755);transform-origin:0 0;">623</div>
<div class="t" style="left:28px;top:321px;font-size:12.6px;color:#000;font-weight:400;">E</div>
<div class="t" style="left:130.5px;top:321px;font-size:12.6px;color:#000;font-weight:400;transform:scaleX(0.9755);transform-origin:0 0;">415</div>
<div class="a" style="left:789px;top:198px;width:15px;height:15px;background:#fff;box-sizing:border-box;border:1px solid #c6c6c6"></div>
<svg class="a" style="left:792px;top:203px;" width="9" height="5" viewBox="0 0 9 5"><path d="M0.5 4.5H8.5L4.5 0.5Z" fill="#777"/></svg>
<div class="a" style="left:789px;top:213px;width:15px;height:63px;background:#fff;box-sizing:border-box;border:1px solid #bcbcbc"></div>
<div class="a" style="left:789px;top:371px;width:15px;height:15px;background:#fff;box-sizing:border-box;border:1px solid #c6c6c6"></div>
<svg class="a" style="left:792px;top:376px;" width="9" height="5" viewBox="0 0 9 5"><path d="M0.5 0.5H8.5L4.5 4.5Z" fill="#777"/></svg>
<div class="a" style="left:0px;top:385px;width:807px;height:28px;background:#e5e6e5;"></div>
<div class="a" style="left:0px;top:385px;width:100px;height:1px;background:#b9b9b9;"></div>
<div class="a" style="left:188px;top:385px;width:598px;height:1px;background:#b9b9b9;"></div>
<div class="a" style="left:100px;top:385px;width:88px;height:24px;background:#fff;"></div>
<div class="a" style="left:100px;top:385px;width:1px;height:24px;background:#9a9a9a;"></div>
<div class="a" style="left:187px;top:385px;width:1px;height:24px;background:#9a9a9a;"></div>
<div class="a" style="left:100px;top:407.5px;width:88px;height:2px;background:#217346;"></div>
<svg class="a" style="left:26px;top:395px;" width="6" height="8" viewBox="0 0 6 8"><path d="M5 0.5V7.5L0.8 4Z" fill="#c0c0c0"/></svg>
<svg class="a" style="left:55px;top:395px;" width="6" height="8" viewBox="0 0 6 8"><path d="M1 0.5V7.5L5.2 4Z" fill="#a8a8a8"/></svg>
<div class="t" style="left:112.4px;top:393px;font-size:12.6px;color:#217346;font-weight:700;transform:scaleX(0.9699);transform-origin:0 0;">Sales 2016</div>
<div class="t" style="left:199.4px;top:393px;font-size:12.6px;color:#444;font-weight:400;transform:scaleX(0.9678);transform-origin:0 0;">Sales 2017</div>
<div class="t" style="left:286.2px;top:393px;font-size:12.6px;color:#444;font-weight:400;transform:scaleX(0.9678);transform-origin:0 0;">Sales 2018</div>
<div class="t" style="left:373.2px;top:393px;font-size:12.6px;color:#444;font-weight:400;transform:scaleX(0.9678);transform-origin:0 0;">Sales 2019</div>
<div class="t" style="left:460.2px;top:393px;font-size:12.6px;color:#444;font-weight:400;transform:scaleX(0.9678);transform-origin:0 0;">Sales 2020</div>
<div class="a" style="left:274px;top:389px;width:1px;height:20px;background:#b0b0b0;"></div>
<div class="a" style="left:361px;top:389px;width:1px;height:20px;background:#b0b0b0;"></div>
<div class="a" style="left:448px;top:389px;width:1px;height:20px;background:#b0b0b0;"></div>
<div class="a" style="left:534px;top:389px;width:1px;height:20px;background:#b0b0b0;"></div>
<svg class="a" style="left:567px;top:390px;" width="18" height="18" viewBox="0 0 18 18"><circle cx="9" cy="9" r="7.8" fill="none" stroke="#6e6e6e" stroke-width="1.2"/><path d="M9 4.5V13.5M4.5 9H13.5" stroke="#6e6e6e" stroke-width="2"/></svg>
<div class="a" style="left:646px;top:394px;width:2px;height:2px;background:#a0a0a0;"></div>
<div class="a" style="left:646px;top:398.5px;width:2px;height:2px;background:#a0a0a0;"></div>
<div class="a" style="left:646px;top:403px;width:2px;height:2px;background:#a0a0a0;"></div>
<div class="a" style="left:663px;top:392px;width:15px;height:14px;background:#fff;box-sizing:border-box;border:1px solid #c6c6c6"></div>
<svg class="a" style="left:667px;top:395px;" width="6" height="8" viewBox="0 0 6 8"><path d="M5 0.5V7.5L1 4Z" fill="#777"/></svg>
<div class="a" style="left:677px;top:392px;width:85px;height:14px;background:#fff;box-sizing:border-box;border:1px solid #bcbcbc"></div>
<div class="a" style="left:771px;top:392px;width:15px;height:14px;background:#fff;box-sizing:border-box;border:1px solid #c6c6c6"></div>
<svg class="a" style="left:775px;top:395px;" width="6" height="8" viewBox="0 0 6 8"><path d="M1 0.5V7.5L5 4Z" fill="#777"/></svg>
<div class="a" style="left:0px;top:413px;width:807px;height:1px;background:#d0d0d0;"></div>
<div class="a" style="left:0px;top:414px;width:807px;height:21px;background:#f3f3f3;"></div>
<div class="t" style="left:7.4px;top:419px;font-size:11.2px;color:#444;font-weight:400;transform:scaleX(0.9430);transform-origin:0 0;">Ready</div>
<svg class="a" style="left:57px;top:416px;" width="15" height="15" viewBox="0 0 15 15"><circle cx="3.5" cy="3.5" r="3" fill="#777"/><rect x="6" y="1" width="8" height="3" fill="#777"/><path d="M1.5 6.5H13.5V13.5H1.5Z" fill="none" stroke="#777"/><path d="M1.5 9H13.5M1.5 11.3H13.5M4.5 6.5V13.5M7.5 6.5V13.5M10.5 6.5V13.5" stroke="#777" stroke-width="0.8"/></svg>
<div class="a" style="left:504px;top:414px;width:38px;height:21px;background:#c8c8c8;"></div>
<svg class="a" style="left:516px;top:417px;" width="13" height="13" viewBox="0 0 13 13"><path d="M0.75 0.75H12.25V12.25H0.75Z M0.75 4.6H12.25 M0.75 8.4H12.25 M4.6 0.75V12.25 M8.4 0.75V12.25" fill="none" stroke="#5a5a5a" stroke-width="1.5"/></svg>
<svg class="a" style="left:554px;top:417px;" width="14" height="13" viewBox="0 0 14 13"><path d="M0.75 0.75H13.25V12.25H0.75Z" fill="none" stroke="#666" stroke-width="1.5"/><path d="M3.75 2.75H10.25V10.25H3.75Z" fill="none" stroke="#666" stroke-width="1.5"/><path d="M5 4.5H9M5 6.5H9M5 8.5H9" stroke="#666" stroke-width="1"/></svg>
<svg class="a" style="left:592px;top:417px;" width="14" height="13" viewBox="0 0 14 13"><path d="M0.75 0.75H13.25V12.25H0.75Z" fill="none" stroke="#666" stroke-width="1.5"/><path d="M0.75 7H7.75V0.75M4.25 0.75V7" fill="none" stroke="#666" stroke-width="1.5"/></svg>
<div class="a" style="left:623px;top:422.5px;width:6px;height:2px;background:#666;"></div>
<div class="a" style="left:633px;top:423px;width:101px;height:1px;background:#a8a8a8;"></div>
<div class="a" style="left:681px;top:418px;width:4px;height:11px;background:#666;"></div>
<svg class="a" style="left:736px;top:418.5px;" width="10" height="10" viewBox="0 0 10 10"><path d="M5 0V9.5M0.5 4.8H9.5" stroke="#666" stroke-width="2"/></svg>
<div class="t" style="left:760.7px;top:418px;font-size:11px;color:#444;font-weight:400;transform:scaleX(0.9310);transform-origin:0 0;">100%</div>
</body></html>
